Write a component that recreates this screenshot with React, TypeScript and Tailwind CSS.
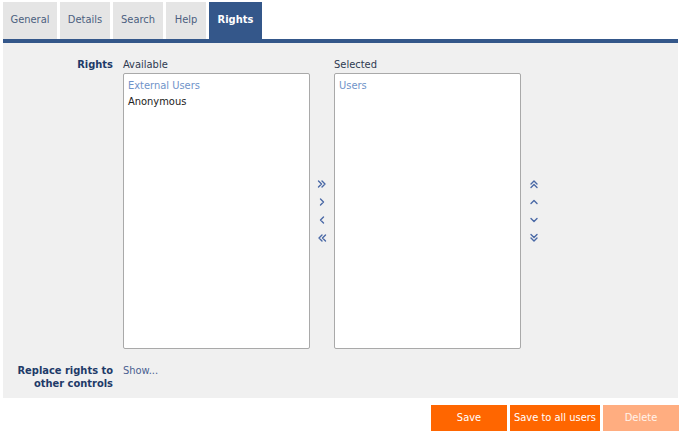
import React from "react";

const font = "font-['DejaVu_Sans_Condensed','DejaVu_Sans',sans-serif] [font-stretch:condensed]";

function Chev({ dir, double }: { dir: "r" | "l" | "u" | "d"; double?: boolean }) {
  const rot = dir === "r" ? 0 : dir === "l" ? 180 : dir === "u" ? -90 : 90;
  return (
    <svg width="10" height="10" viewBox="0 0 10 10" style={{ transform: `rotate(${rot}deg)` }}>
      {double ? (
        <g fill="none" stroke="#4a69a6" strokeWidth="1.4" strokeLinecap="round" strokeLinejoin="round">
          <path d="M1.5 2 L4.5 5 L1.5 8" />
          <path d="M5 2 L8 5 L5 8" />
        </g>
      ) : (
        <path d="M3.5 2 L6.5 5 L3.5 8" fill="none" stroke="#4a69a6" strokeWidth="1.4" strokeLinecap="round" strokeLinejoin="round" />
      )}
    </svg>
  );
}

const tabs = [
  { name: "General", w: "w-[54px]" },
  { name: "Details", w: "w-[50px]" },
  { name: "Search", w: "w-[50px]" },
  { name: "Help", w: "w-[40px]" },
];

export default function App() {
  return (
    <div className={`w-[680px] h-[432px] bg-white text-[11px] ${font}`}>
      <div className="flex gap-[3px] pl-[3px] pt-[2px]">
        {tabs.map((t) => (
          <div key={t.name} className={`${t.w} h-[37px] bg-[#e5e5e5] text-[#4c5f80] flex items-center justify-center`}>
            {t.name}
          </div>
        ))}
        <div className="w-[53px] h-[37px] bg-[#34578a] text-white font-bold flex items-center justify-center">Rights</div>
      </div>
      <div className="mx-[3px] w-[675px] h-[4px] bg-[#34578a]" />
      <div className="mx-[3px] w-[675px] h-[355px] bg-[#f0f0f0] pt-[15px]">
        <div className="flex">
          <div className="w-[110px] text-right font-bold text-[#1e3a68] leading-[14px]">Rights</div>
          <div className="ml-[10px] flex">
            <div className="w-[187px] flex flex-col">
              <div className="h-[15px] leading-[14px] text-[#2e3a50]">Available</div>
              <div className="h-[276px] bg-white border border-[#a9a9a9] rounded-[2px] pt-[4px] pl-[4px] leading-[16px]">
                <div className="text-[#6f93c9]">External Users</div>
                <div className="text-[#222]">Anonymous</div>
              </div>
            </div>
            <div className="w-[24px] flex flex-col items-center justify-center gap-[8px] pt-[15px]">
              <Chev dir="r" double />
              <Chev dir="r" />
              <Chev dir="l" />
              <Chev dir="l" double />
            </div>
            <div className="w-[187px] flex flex-col">
              <div className="h-[15px] leading-[14px] text-[#2e3a50]">Selected</div>
              <div className="h-[276px] bg-white border border-[#a9a9a9] rounded-[2px] pt-[4px] pl-[4px] leading-[16px]">
                <div className="text-[#6f93c9]">Users</div>
              </div>
            </div>
            <div className="w-[26px] flex flex-col items-center justify-center gap-[8px] pt-[15px]">
              <Chev dir="u" double />
              <Chev dir="u" />
              <Chev dir="d" />
              <Chev dir="d" double />
            </div>
          </div>
        </div>
        <div className="flex mt-[15px]">
          <div className="w-[110px] text-right font-bold text-[#1e3a68] leading-[13px]">
            Replace rights to
            <br />
            other controls
          </div>
          <div className="ml-[10px] text-[#4a6090] leading-[13px]">Show...</div>
        </div>
      </div>
      <div className="flex justify-end gap-[3px] pr-[1px] mt-[7px]">
        <div className="w-[76px] h-[26px] bg-[#ff6600] text-white flex items-center justify-center">Save</div>
        <div className="w-[90px] h-[26px] bg-[#ff6600] text-white flex items-center justify-center">Save to all users</div>
        <div className="w-[76px] h-[26px] bg-[#ffad80] text-[#fff3ea] flex items-center justify-center">Delete</div>
      </div>
    </div>
  );
}
